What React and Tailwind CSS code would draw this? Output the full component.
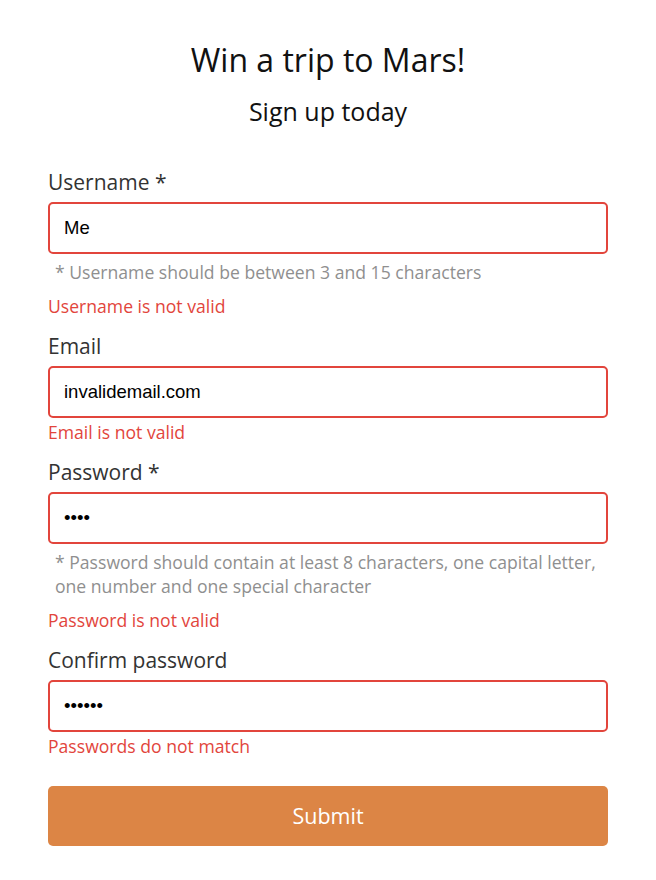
import React from "react";

const font = { fontFamily: "'Open Sans', sans-serif" };

function Field({ label, type, value, hint, error }) {
  return (
    <div className="flex flex-col">
      <label className="text-[21px] leading-[28px] text-[#333] mb-[6px]">{label}</label>
      <input
        type={type}
        defaultValue={value}
        className="h-[52px] w-full rounded-[5px] border-2 border-[#e2453c] px-[14px] text-[18.5px] text-black outline-none font-['Liberation_Sans',Arial,sans-serif]"
      />
      {hint && (
        <p className="mt-[6px] pl-[7px] text-[17.6px] leading-[24px] text-[#8f8f8f]">{hint}</p>
      )}
      <p className={`${hint ? "mt-[10px]" : "mt-[2px]"} text-[17.6px] leading-[24px] text-[#e2453c]`}>{error}</p>
    </div>
  );
}

export default function App() {
  return (
    <div className="min-h-[880px] bg-white" style={font}>
      <div className="mx-auto w-[560px] pt-[42px]">
        <h1 className="text-center text-[32px] leading-[36px] text-[#111]">Win a trip to Mars!</h1>
        <h2 className="mt-[17px] text-center text-[25px] leading-[32px] text-[#111]">Sign up today</h2>
        <form className="mt-[41px] flex flex-col gap-[14px]" onSubmit={(e) => e.preventDefault()}>
          <Field
            label="Username *"
            type="text"
            value="Me"
            hint="* Username should be between 3 and 15 characters"
            error="Username is not valid"
          />
          <Field label="Email" type="text" value="invalidemail.com" error="Email is not valid" />
          <Field
            label="Password *"
            type="password"
            value="1234"
            hint="* Password should contain at least 8 characters, one capital letter, one number and one special character"
            error="Password is not valid"
          />
          <Field label="Confirm password" type="password" value="123456" error="Passwords do not match" />
          <button
            type="submit"
            className="mt-[14px] h-[60px] w-full rounded-[5px] bg-[#dc8545] text-[21.5px] text-white"
          >
            Submit
          </button>
        </form>
      </div>
    </div>
  );
}
